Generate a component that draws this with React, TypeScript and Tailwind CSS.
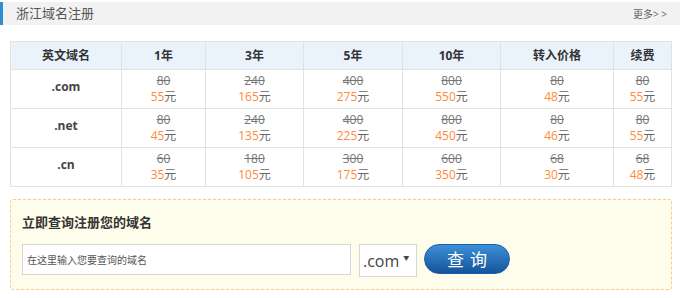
import React from 'react';

type PriceCell = { old: string; now: string };
type DomainRow = { name: string; prices: PriceCell[] };

const columns = [
  { label: '英文域名', w: 'w-[111px]' },
  { label: '1年', w: 'w-[84px]' },
  { label: '3年', w: 'w-[98px]' },
  { label: '5年', w: 'w-[99px]' },
  { label: '10年', w: 'w-[98px]' },
  { label: '转入价格', w: 'w-[113px]' },
  { label: '续费', w: 'w-[58px]' },
];

const rows: DomainRow[] = [
  {
    name: '.com',
    prices: [
      { old: '80', now: '55' },
      { old: '240', now: '165' },
      { old: '400', now: '275' },
      { old: '800', now: '550' },
      { old: '80', now: '48' },
      { old: '80', now: '55' },
    ],
  },
  {
    name: '.net',
    prices: [
      { old: '80', now: '45' },
      { old: '240', now: '135' },
      { old: '400', now: '225' },
      { old: '800', now: '450' },
      { old: '80', now: '46' },
      { old: '80', now: '55' },
    ],
  },
  {
    name: '.cn',
    prices: [
      { old: '60', now: '35' },
      { old: '180', now: '105' },
      { old: '300', now: '175' },
      { old: '600', now: '350' },
      { old: '68', now: '30' },
      { old: '68', now: '48' },
    ],
  },
];

export default function App() {
  return (
    <div className="w-[680px] h-[298px] bg-white font-['Open_Sans','Noto_Sans_CJK_SC',sans-serif] text-[#333]">
      <div className="pt-[2px]">
        <div className="h-[23px] bg-[#f2f2f2] border-l-[3px] border-l-[#2f8fd0] flex items-center justify-between pl-[13px] pr-[13px]">
          <span className="text-[13px] text-[#555] leading-none">浙江域名注册</span>
          <span className="text-[10px] text-[#666] leading-none">更多&gt; &gt;</span>
        </div>
      </div>

      <div className="pl-[10px] pt-[16px]">
        <table className="border-collapse table-fixed w-[662px] text-[12px]">
          <thead>
            <tr className="h-[28px] bg-[#eaf2fb]">
              {columns.map(c => (
                <th key={c.label} className={`${c.w} border border-[#e2e2e2] font-bold text-[12px] text-[#333] text-center p-0`}>
                  {c.label}
                </th>
              ))}
            </tr>
          </thead>
          <tbody>
            {rows.map(r => (
              <tr key={r.name} className="h-[39px]">
                <td className="border border-[#e2e2e2] text-center font-bold text-[#444] p-0 pb-[4px]">{r.name}</td>
                {r.prices.map((p, i) => (
                  <td key={i} className="border border-[#e2e2e2] text-center p-0 leading-[16px]">
                    <div className="line-through text-[#777]">{p.old}</div>
                    <div>
                      <span className="text-[#ff8a3a]">{p.now}</span>
                      <span className="text-[#666]">元</span>
                    </div>
                  </td>
                ))}
              </tr>
            ))}
          </tbody>
        </table>
      </div>

      <div className="ml-[10px] mt-[12px] w-[662px] h-[91px] border border-dashed border-[#fcc894] rounded-[3px] bg-[#fefdeb] pl-[11px] pt-[12px]">
        <h3 className="text-[13px] font-bold text-[#333] leading-[20px]">立即查询注册您的域名</h3>
        <div className="flex items-start mt-[12px]">
          <input
            type="text"
            placeholder="在这里输入您要查询的域名"
            className="w-[329px] h-[31px] bg-white border border-[#d6d6d6] px-[4px] text-[10px] text-[#555] placeholder:text-[#555] outline-none"
          />
          <div className="ml-[8px] w-[58px] h-[33px] bg-white border border-[#d6d6d6] flex items-center pl-[3px] text-[16px] text-[#444]">
            <span>.com</span>
            <span className="ml-[4px] mb-[4px] text-[6px] text-[#444]">▼</span>
          </div>
          <button className="ml-[7px] w-[86px] h-[30px] rounded-full bg-gradient-to-b from-[#3d8fd8] to-[#14559c] border border-[#175ea8] text-white text-[17px] tracking-[6px] pl-[6px] leading-none">
            查询
          </button>
        </div>
      </div>
    </div>
  );
}
